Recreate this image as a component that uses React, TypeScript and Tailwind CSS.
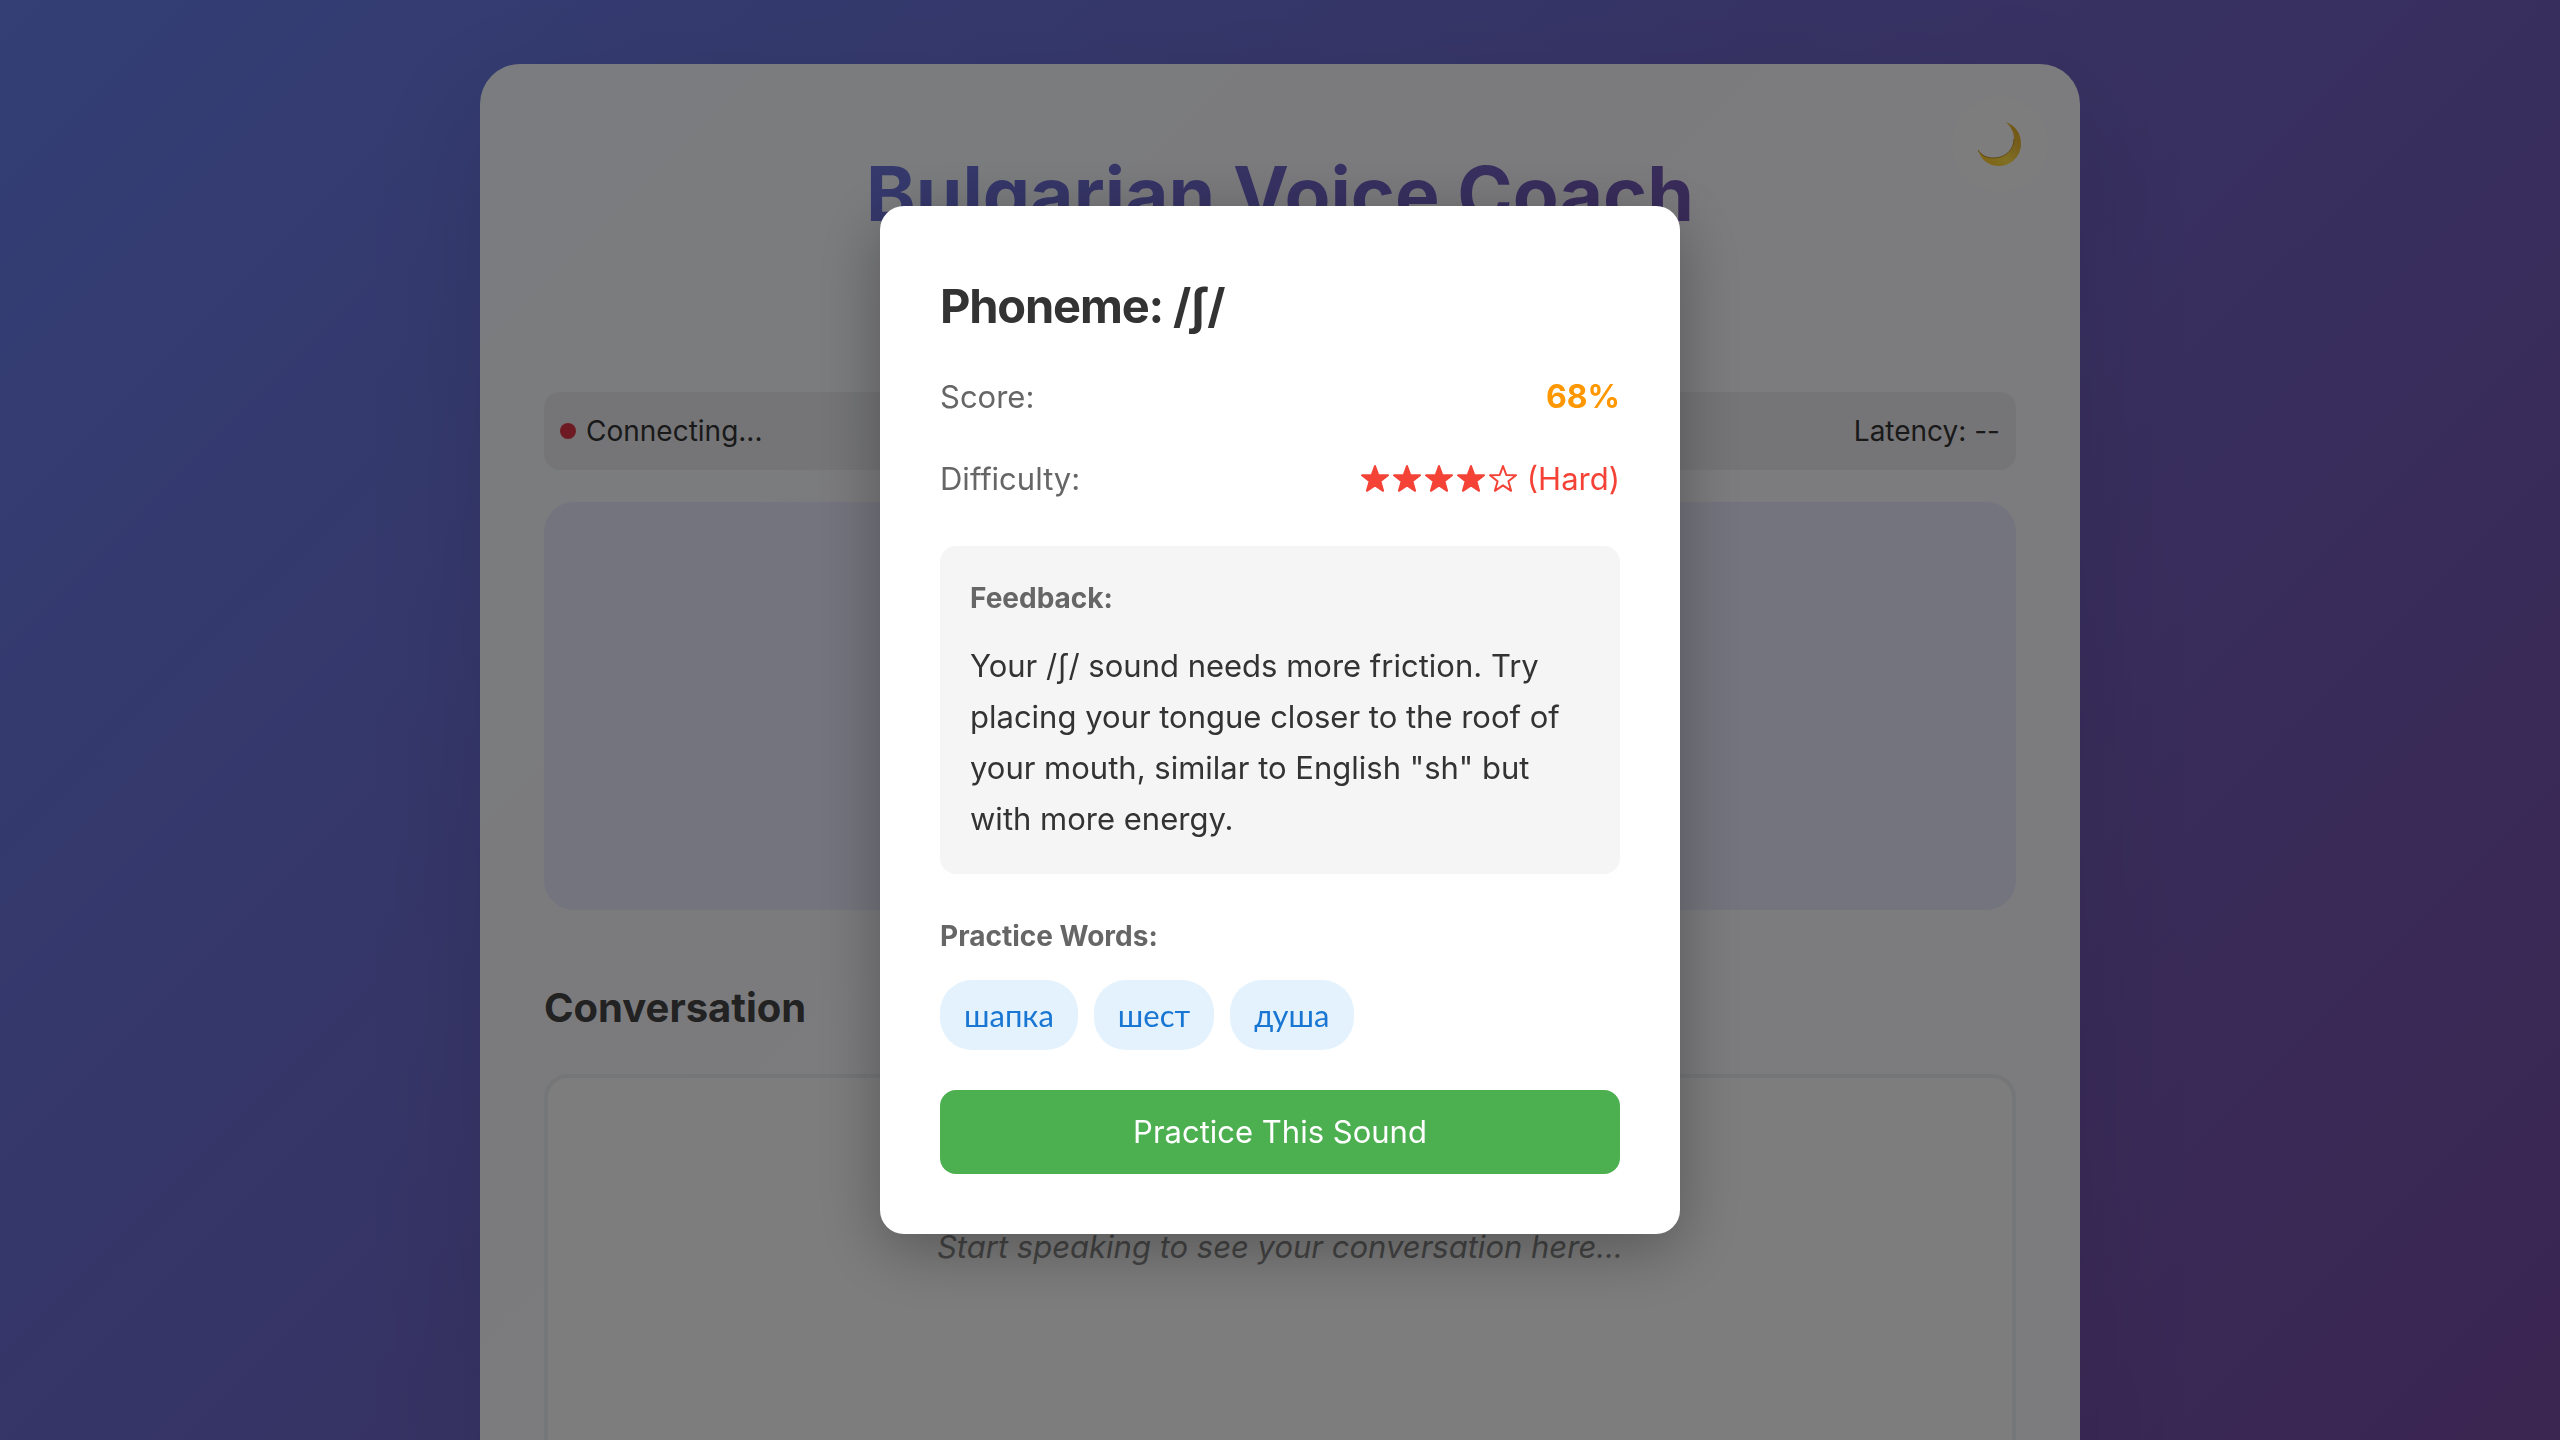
import { useState } from "react";

const words = ["шапка", "шест", "душа"];

function Star({ filled }: { filled: boolean }) {
  return (
    <svg viewBox="0 0 32 32" className="size-8" aria-hidden="true">
      <path
        d="M16 3 L19.3 12 L29 12.3 L21.4 18.3 L24.1 27.8 L16 22.3 L7.9 27.8 L10.6 18.3 L3 12.3 L12.7 12 Z"
        fill={filled ? "currentColor" : "none"}
        stroke="currentColor"
        strokeWidth="2"
        strokeLinejoin="round"
      />
    </svg>
  );
}

function Moon() {
  return (
    <svg viewBox="0 0 44 44" className="size-11" aria-hidden="true">
      <defs>
        <linearGradient id="moon" x1="0" y1="1" x2="1" y2="0">
          <stop offset="0" stopColor="#ffbe1c" />
          <stop offset="0.4" stopColor="#ffdf48" />
          <stop offset="0.7" stopColor="#ecbc38" />
          <stop offset="1" stopColor="#dfa820" />
        </linearGradient>
      </defs>
      <path
        d="M28 0 C38 4 43 12 43 22 C43 34 33 44 21 44 C11 44 3 38 0 28 C4 34 9 36 16 36 C27 36 36 28 36 17 C36 10 33 5 28 0 Z"
        fill="url(#moon)"
      />
      <path
        d="M0 28 C4 34 9 36 16 36 C27 36 36 28 36 17"
        fill="none"
        stroke="#c2952a"
        strokeWidth="1"
      />
    </svg>
  );
}

function PhonemeDialog({ onClose }: { onClose: () => void }) {
  return (
    <div className="fixed inset-0 flex items-center justify-center bg-black/50">
      <section
        role="dialog"
        aria-modal="true"
        aria-labelledby="phoneme-title"
        className="w-[800px] max-w-[90%] rounded-3xl bg-white p-[60px] text-[#333] shadow-[0_16px_64px_rgba(0,0,0,0.3)]"
      >
        <h2 id="phoneme-title" className="mt-3 text-[47px] leading-[56px] font-bold tracking-tight">
          Phoneme: /ʃ/
        </h2>
        <div className="mt-[38px] flex items-center justify-between leading-[50px]">
          <span className="text-[#666]">Score:</span>
          <span className="text-[32px] font-bold text-[#ff9800]">68%</span>
        </div>
        <div className="mt-8 flex items-center justify-between leading-[50px]">
          <span className="text-[#666]">Difficulty:</span>
          <span className="flex items-center text-[#f44336]">
            {[1, 2, 3, 4, 5].map((n) => (
              <Star key={n} filled={n < 5} />
            ))}
            <span className="ml-2">(Hard)</span>
          </span>
        </div>
        <div className="mt-[42px] rounded-2xl bg-[#f5f5f5] p-[30px]">
          <h3 className="text-[28px] leading-[44px] font-bold text-[#666]">Feedback:</h3>
          <p className="mt-5 leading-[51px]">
            Your /ʃ/ sound needs more friction. Try placing your tongue closer to the roof of your
            mouth, similar to English "sh" but with more energy.
          </p>
        </div>
        <h3 className="mt-10 text-[28px] leading-[44px] font-bold text-[#666]">Practice Words:</h3>
        <ul className="mt-[22px] flex flex-wrap gap-4" lang="bg">
          {words.map((word) => (
            <li
              key={word}
              className="rounded-[32px] bg-[#e3f2fd] px-6 py-3 font-[Lato,sans-serif] leading-[46px] text-[#1976d2]"
            >
              {word}
            </li>
          ))}
        </ul>
        <button
          type="button"
          onClick={onClose}
          className="mt-10 h-[84px] w-full rounded-2xl bg-[#4caf50] text-white"
        >
          Practice This Sound
        </button>
      </section>
    </div>
  );
}

export default function App() {
  const [open, setOpen] = useState(true);
  return (
    <div className="h-screen overflow-hidden bg-[linear-gradient(135deg,#667eea_0%,#764ba2_100%)] px-8 pt-16 font-[Inter,sans-serif] text-[31px] text-[#333]">
      <main className="relative mx-auto min-h-screen max-w-[1600px] rounded-[40px] bg-white/95 px-16 pt-20 shadow-[0_40px_120px_rgba(0,0,0,0.1)]">
        <button
          type="button"
          aria-label="Toggle dark mode"
          className="absolute top-8 right-8 flex size-24 items-center justify-center rounded-full bg-[#fffef8]/50"
        >
          <Moon />
        </button>
        <h1 className="bg-[linear-gradient(135deg,#667eea,#764ba2)] bg-clip-text text-center text-[75px] leading-[100px] font-bold text-transparent">
          Bulgarian Voice Coach
        </h1>
        <div className="mt-[148px] flex h-[78px] items-center justify-between rounded-2xl bg-black/5 px-4 text-[28px]">
          <span className="flex items-center gap-[10px]">
            <span className="size-4 rounded-full bg-[#dc3545]" />
            Connecting...
          </span>
          <span>Latency: --</span>
        </div>
        <div className="mt-8 h-[408px] rounded-[30px] bg-[#e9e9fd]" />
        <h2 className="mt-[70px] text-[40px] leading-[56px] font-bold text-[#444]">Conversation</h2>
        <div className="mt-[38px] h-[600px] rounded-3xl border-4 border-[#e9ecef] bg-[#fafafa] pt-[143px] text-center leading-[51px] text-[#888] italic">
          Start speaking to see your conversation here...
        </div>
      </main>
      {open && <PhonemeDialog onClose={() => setOpen(false)} />}
    </div>
  );
}
